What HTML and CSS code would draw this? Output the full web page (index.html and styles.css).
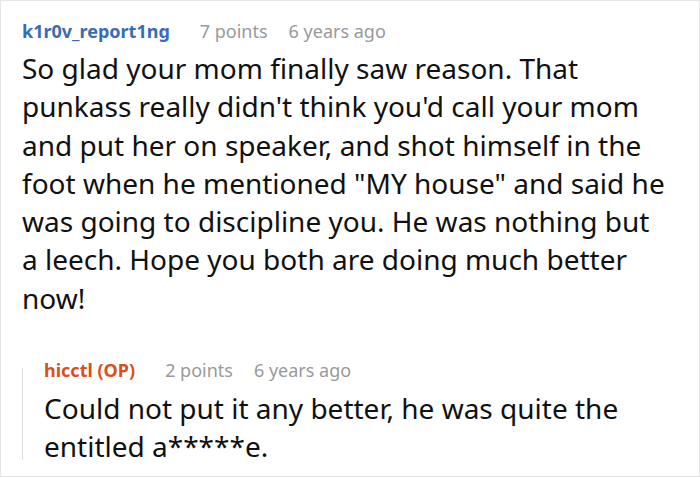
FILE: index.html
```html
<!DOCTYPE html>
<html>
<head>
<meta charset="utf-8">
<link rel="stylesheet" href="styles.css">
</head>
<body>
<div class="thread">
  <div class="comment">
    <div class="meta">
      <span class="author">k1r0v_report1ng</span>
      <span class="points">7 points</span>
      <span class="time">6 years ago</span>
    </div>
    <p class="text">So glad your mom finally saw reason. That punkass really didn't think you'd call your mom and put her on speaker, and shot himself in the foot when he mentioned "MY house" and said he was going to discipline you. He was nothing but a leech. Hope you both are doing much better now!</p>
    <div class="reply">
      <div class="meta">
        <span class="author op">hicctl (OP)</span>
        <span class="points">2 points</span>
        <span class="time">6 years ago</span>
      </div>
      <p class="text">Could not put it any better, he was quite the entitled a*****e.</p>
    </div>
  </div>
</div>
</body>
</html>
```

FILE: styles.css
```css
html, body {
  margin: 0;
  padding: 0;
  background: #fff;
}
.thread {
  width: 700px;
  height: 477px;
  box-sizing: border-box;
  border: 1px solid #e6e6e6;
  padding: 17px 31px 0 21px;
  font-family: "Noto Sans", "Open Sans", sans-serif;
  overflow: hidden;
}
.meta {
  display: flex;
  align-items: baseline;
  gap: 21px;
  font-size: 18px;
  line-height: 26px;
  color: #999;
}
.author {
  font-weight: 700;
  color: #3a6bb5;
  margin-right: 9px;
}
.author.op {
  color: #d9501c;
}
.text {
  margin: 5px 0 0;
  font-size: 28px;
  line-height: 38.3px;
  color: #111;
}
.reply {
  position: relative;
  margin-top: 40px;
  padding-left: 22px;
}
.reply::before {
  content: "";
  position: absolute;
  left: 0;
  top: 11px;
  bottom: 6px;
  width: 1px;
  background: #e0e0e0;
}
.reply .text {
  margin-top: 6px;
}
```
